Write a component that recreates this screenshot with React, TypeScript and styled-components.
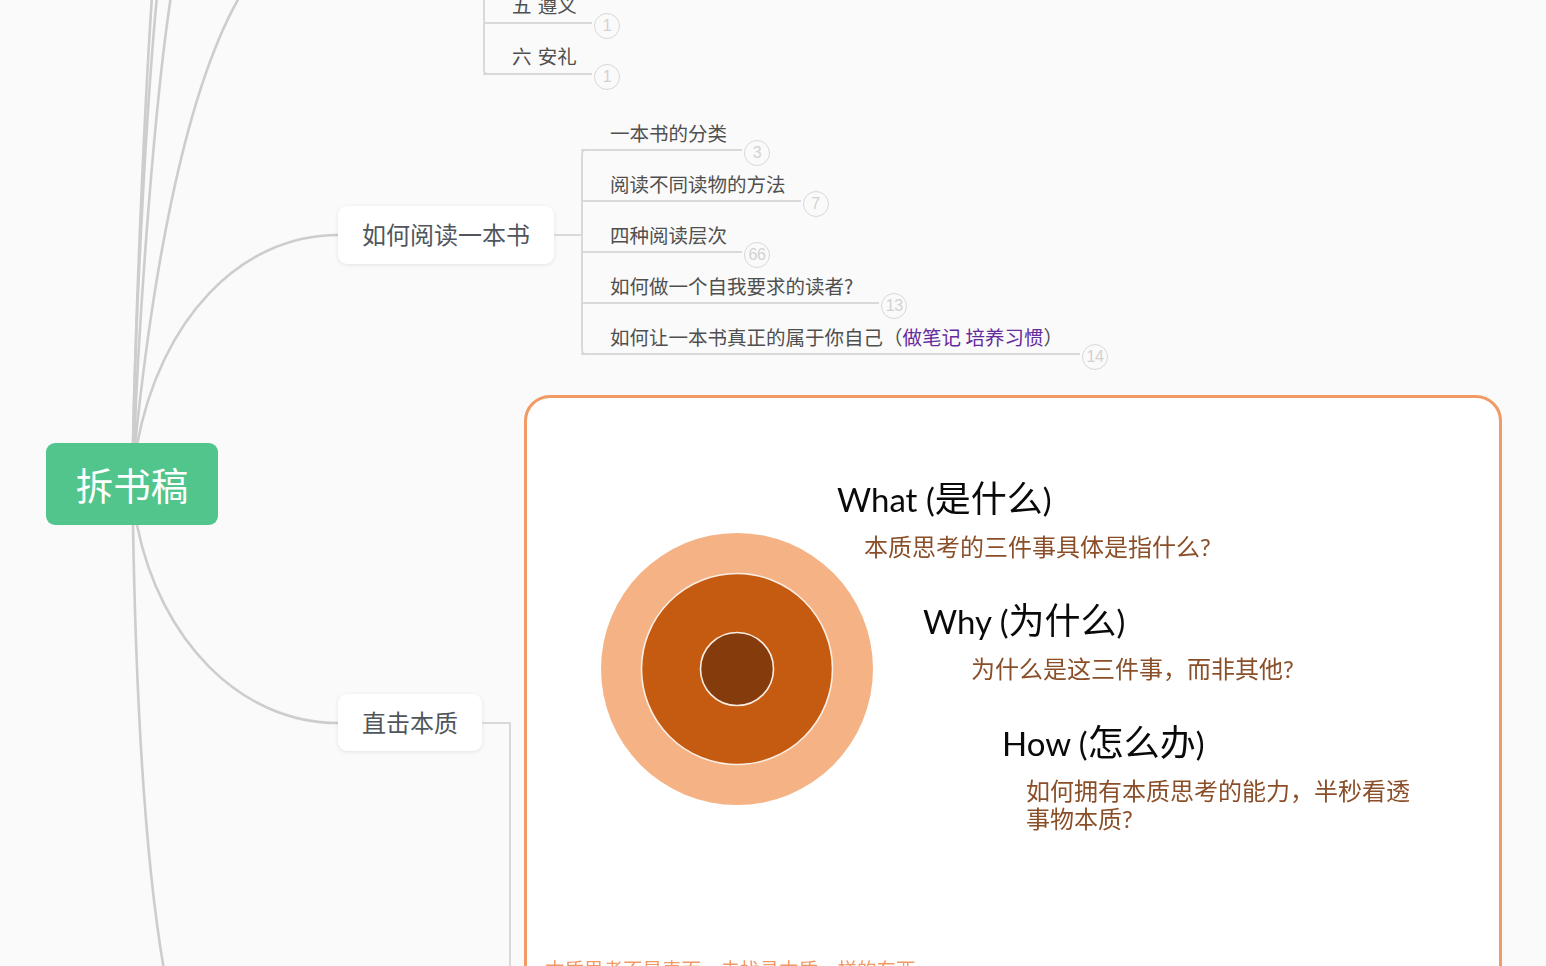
import type { ReactNode } from "react";
import styled, { createGlobalStyle } from "styled-components";

const UI_FONT = `"Noto Sans CJK SC", "Noto Sans", sans-serif`;
const SLIDE_FONT = `Lato, "Noto Sans CJK SC", sans-serif`;
const LINE = '#cdcdcd';
const THIN_LINE = '#d9d9d9';

type LeafData = {
    label: ReactNode;
    count: number;
    pad?: number;
};

const App = () => {
    const readingLeaves: LeafData[] = [
        { label: '一本书的分类', count: 3 },
        { label: '阅读不同读物的方法', count: 7 },
        { label: '四种阅读层次', count: 66 },
        { label: '如何做一个自我要求的读者?', count: 13, pad: 26 },
        { label: <>如何让一本书真正的属于你自己（<Link>做笔记 培养习惯</Link>）</>, count: 14, pad: 17 },
    ];

    return (
        <Canvas>
            <GlobalStyle />
            <Curves viewBox="0 0 1546 966">
                <path d="M133 445 C136 300 145 100 152 -4" />
                <path d="M133 445 C136 300 147 100 157 -4" />
                <path d="M134 445 C140 300 155 100 171 -4" />
                <path d="M135 445 C150 300 180 100 240 -4" />
                <path d="M137 445 C160 320 240 235 338 235" />
                <path d="M137 525 C160 640 240 723 338 723" />
                <path d="M133 525 C136 700 145 860 164 970" />
            </Curves>

            <Root>拆书稿</Root>

            <LeafList $x={483} $y={-24} $open>
                <Leaf><SpacedLabel>五 遵义</SpacedLabel><Counter>1</Counter></Leaf>
                <Leaf><SpacedLabel>六 安礼</SpacedLabel><Counter>1</Counter></Leaf>
            </LeafList>

            <Topic $x={338} $y={206} $h={58}>如何阅读一本书</Topic>
            <Stub />
            <LeafList $x={581} $y={103}>
                {readingLeaves.map((leaf) => (
                    <Leaf key={leaf.count}>
                        <LeafLabel $pad={leaf.pad}>{leaf.label}</LeafLabel>
                        <Counter>{leaf.count}</Counter>
                    </Leaf>
                ))}
            </LeafList>

            <Topic $x={338} $y={694} $h={57}>直击本质</Topic>
            <Elbow />

            <ImageCard>
                <Slide>
                    <Target viewBox="0 0 272 272">
                        <circle cx="136" cy="136" r="136" fill="#f5b385" />
                        <circle cx="136" cy="136" r="95.5" fill="#c55a11" stroke="#fbeee4" strokeWidth="1.6" />
                        <circle cx="136" cy="136" r="36.5" fill="#843c0c" stroke="#fbeee4" strokeWidth="1.6" />
                    </Target>
                    <Questions>
                        <Question $indent={0}>
                            <QuestionTitle>What (<TitleCjk>是什么</TitleCjk>)</QuestionTitle>
                            <QuestionText $indent={27}>本质思考的三件事具体是指什么?</QuestionText>
                        </Question>
                        <Question $indent={86}>
                            <QuestionTitle>Why (<TitleCjk>为什么</TitleCjk>)</QuestionTitle>
                            <QuestionText $indent={48}>为什么是这三件事，而非其他?</QuestionText>
                        </Question>
                        <Question $indent={165}>
                            <QuestionTitle>How (<TitleCjk>怎么办</TitleCjk>)</QuestionTitle>
                            <QuestionText $indent={24}>如何拥有本质思考的能力，半秒看透<br />事物本质?</QuestionText>
                        </Question>
                    </Questions>
                </Slide>
                <Caption>本质思考不是表面，去找寻本质一样的东西</Caption>
            </ImageCard>
        </Canvas>
    );
}

export default App;


const GlobalStyle = createGlobalStyle`
    html, body {
        margin: 0;
        padding: 0;
        background-color: #fafafa;
    }
`;

const Canvas = styled.div`
    position: relative;
    width: 1546px;
    height: 966px;
    overflow: hidden;
    background-color: #fafafa;
    font-family: ${UI_FONT};
`;

const Curves = styled.svg`
    position: absolute;
    left: 0;
    top: 0;
    width: 1546px;
    height: 966px;
    fill: none;
    stroke: ${LINE};
    stroke-width: 2.6;
`;

const Root = styled.div`
    position: absolute;
    left: 46px;
    top: 443px;
    width: 172px;
    height: 82px;
    padding-bottom: 2px;
    box-sizing: border-box;
    display: flex;
    align-items: center;
    justify-content: center;
    border-radius: 9px;
    background-color: #52c58d;
    color: #ffffff;
    font-size: 37.5px;
`;

const Topic = styled.div<{
    $x: number;
    $y: number;
    $h: number;
}>`
    position: absolute;
    left: ${props => props.$x}px;
    top: ${props => props.$y}px;
    height: ${props => props.$h}px;
    display: flex;
    align-items: center;
    padding: 0 24px 3px;
    box-sizing: border-box;
    border-radius: 9px;
    background-color: #ffffff;
    box-shadow: 0 1px 4px #00000018;
    color: #50565c;
    font-size: 24px;
`;

const Stub = styled.div`
    position: absolute;
    left: 554px;
    top: 234px;
    width: 28px;
    height: 2px;
    background-color: ${THIN_LINE};
`;

const LeafList = styled.div<{
    $x: number;
    $y: number;
    $open?: boolean;
}>`
    position: absolute;
    left: ${props => props.$x}px;
    top: ${props => props.$y}px;
    display: flex;
    flex-direction: column;
    &::before {
        content: '';
        position: absolute;
        left: 0;
        top: ${props => props.$open ? '0' : '46px'};
        bottom: 3px;
        width: 10px;
        box-sizing: border-box;
        border: solid 2px ${THIN_LINE};
        border-right: none;
        border-top: ${props => props.$open ? 'none' : `solid 2px ${THIN_LINE}`};
        border-radius: ${props => props.$open ? '0 0 0 5px' : '5px 0 0 5px'};
    }
`;

const Leaf = styled.div`
    display: flex;
    align-items: flex-end;
    height: 51px;
    padding-bottom: 3px;
    box-sizing: border-box;
`;

const LeafLabel = styled.div<{
    $pad?: number;
}>`
    padding: 0 ${props => props.$pad ?? 15}px 2px 29px;
    line-height: 29px;
    border-bottom: solid 2px ${THIN_LINE};
    color: #4f4f4f;
    font-size: 19.5px;
    white-space: nowrap;
`;

const SpacedLabel = styled(LeafLabel)`
    padding-bottom: 3px;
    word-spacing: 2px;
`;

const Counter = styled.div`
    width: 26px;
    height: 26px;
    margin: 0 0 -15px 2px;
    box-sizing: border-box;
    display: flex;
    align-items: center;
    justify-content: center;
    border: solid 1px #d8d8d8;
    border-radius: 50%;
    background-color: #fafafa;
    color: #d2d2d2;
    font-family: "Liberation Sans", sans-serif;
    font-size: 16px;
    letter-spacing: -0.5px;
`;

const Link = styled.span`
    color: #652a9c;
`;

const Elbow = styled.div`
    position: absolute;
    left: 482px;
    top: 722px;
    width: 29px;
    height: 300px;
    box-sizing: border-box;
    border-top: solid 2px ${THIN_LINE};
    border-right: solid 2px ${THIN_LINE};
`;

const ImageCard = styled.div`
    position: absolute;
    left: 524px;
    top: 395px;
    width: 978px;
    height: 640px;
    box-sizing: border-box;
    padding: 0 0 0 18px;
    border: solid 3px #f29a66;
    border-radius: 26px;
    background-color: #ffffff;
`;

const Slide = styled.div`
    display: flex;
    align-items: flex-start;
    height: 559px;
    filter: blur(0.5px);
`;

const Target = styled.svg`
    flex: none;
    width: 272px;
    height: 272px;
    margin: 135px 0 0 56px;
`;

const Questions = styled.div`
    display: flex;
    flex-direction: column;
    margin-left: -36px;
    padding-top: 75px;
`;

const Question = styled.div<{
    $indent: number;
}>`
    margin: 0 0 23px ${props => props.$indent}px;
    height: 99px;
`;

const QuestionTitle = styled.div`
    height: 50px;
    line-height: 50px;
    color: #0a0a0a;
    font-family: ${SLIDE_FONT};
    font-size: 33px;
    white-space: nowrap;
`;

const TitleCjk = styled.span`
    font-size: 36px;
`;

const QuestionText = styled.div<{
    $indent: number;
}>`
    margin: 10px 0 0 ${props => props.$indent}px;
    line-height: 28px;
    color: #8a4f28;
    font-family: ${SLIDE_FONT};
    font-size: 24px;
    white-space: nowrap;
`;

const Caption = styled.div`
    color: #f29a66;
    font-size: 19.5px;
    line-height: 24px;
    filter: blur(0.5px);
`;
